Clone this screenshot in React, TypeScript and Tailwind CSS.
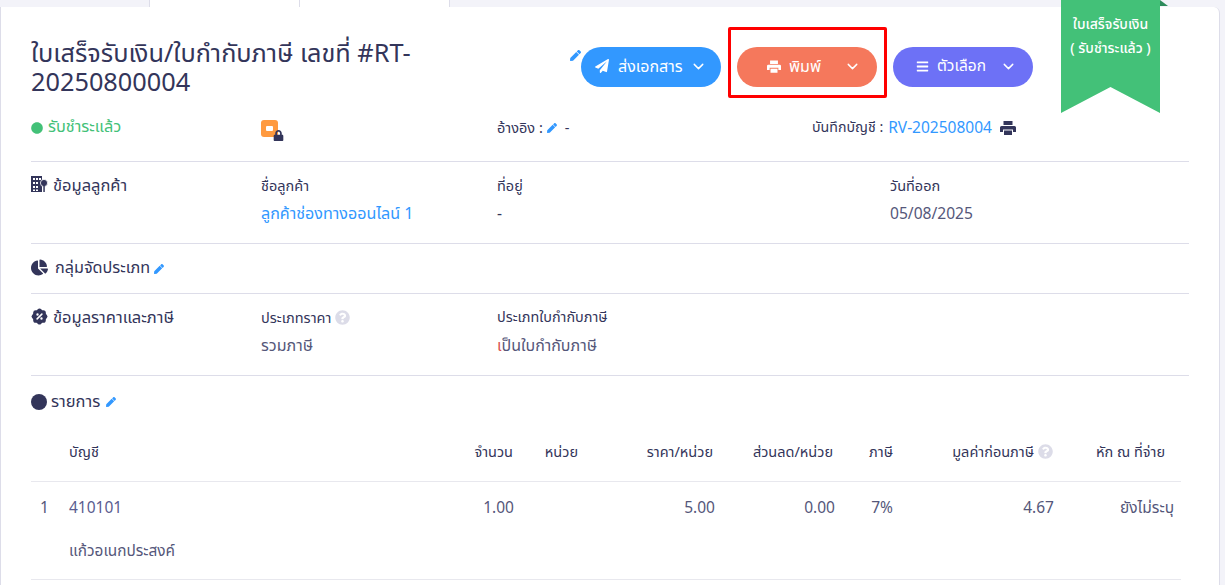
import { FaPaperPlane, FaBars, FaPen, FaChartPie, FaLock, FaQuestionCircle, FaCircle } from "react-icons/fa";
import { FiChevronDown } from "react-icons/fi";
import { TbRosetteDiscountFilled } from "react-icons/tb";

const font = { fontFamily: '"Noto Sans", "Noto Sans Thai", sans-serif' };
const Pen = ({ c = "" }: { c?: string }) => <FaPen className={`text-[#3298ff] text-[10px] ${c}`} />;
const Q = () => <FaQuestionCircle className="text-[#dcdce8] text-[15px] shrink-0" />;

const Th = ({ w, children, right = true }: { w: string; children?: React.ReactNode; right?: boolean }) => (
  <div className={`${w} shrink-0 ${right ? "flex justify-end items-center gap-1 whitespace-nowrap" : ""}`}>{children}</div>
);

const Building = () => (
  <svg width="17" height="17" viewBox="0 0 17 17" className="shrink-0 mt-[3px]">
    <path fill="#33355a" fillRule="evenodd" d="M0 0h11v16H0zM2 2v2h2V2zm3 0v2h2V2zm3 0v2h2V2zM2 6v2h2V6zm3 0v2h2V6zM2 10v2h2v-2zm3 0v2h2v-2zM2 13.500V15h2v-1.500zm3 0V15h2v-1.500z" />
    <circle cx="13" cy="7" r="3.600" fill="#33355a" stroke="#fff" strokeWidth="0.800" />
    <rect x="12.300" y="9" width="1.500" height="7" fill="#33355a" />
  </svg>
);

const Printer = ({ c = "" }: { c?: string }) => (
  <svg viewBox="0 0 16 14" className={`shrink-0 ${c}`} fill="currentColor">
    <path d="M3.500 0h9v4h-9zM1.500 5h13a1.500 1.500 0 0 1 1.500 1.500V11h-3V8.500H3V11H0V6.500A1.500 1.500 0 0 1 1.500 5zM4 9.500h8V14H4z" />
  </svg>
);

export default function App() {
  return (
    <div style={font} className="w-[1225px] h-[585px] overflow-hidden bg-[#f3f3f9] text-[#33355a] text-[16px] relative">
      <div className="ml-[149px] w-[301px] h-[8px] bg-white border border-t-0 border-[#dddde9] flex">
        <div className="w-[150px] border-r border-[#dddde9]" />
      </div>
      <div className="w-[1220px] h-[600px] -mt-px bg-white border-l border-r border-[#dddde9] rounded-tr-md pl-[30px] pr-[30px] relative">
        <div className="absolute top-[-7px] left-[1159px] w-0 h-0 border-l-[8px] border-t-[6px] border-l-[#2e8b5c] border-t-transparent" />
        <div className="absolute top-[-7px] left-[1060px] w-[99px] h-[113px] bg-[#43c178] text-white text-[14px] font-medium text-center pt-[14px] [clip-path:polygon(0_0,100%_0,100%_100%,50%_77%,0_100%)]">
          <div className="leading-[20px] whitespace-nowrap">ใบเสร็จรับเงิน</div>
          <div className="leading-[28px] whitespace-nowrap">( รับชำระแล้ว )</div>
        </div>
        <div className="flex pt-[32px] h-[97px]">
          <h1 className="w-[400px] shrink-0 text-[25.3px] leading-[29px] font-normal -mt-[1px]">ใบเสร็จรับเงิน/ใบกำกับภาษี เลขที่ #RT-20250800004</h1>
          <div className="ml-[139px] flex items-start pt-[8px] relative">
            <Pen c="mt-[3px] text-[11px]" />
            <button className="w-[140px] h-[40px] rounded-full bg-[#3298ff] text-white text-[16px] flex items-center pl-[14px] pb-[2px]"><FaPaperPlane className="text-[14px] mr-[9px]" />ส่งเอกสาร<FiChevronDown className="text-[17px] ml-[7px]" /></button>
            <div className="ml-[7px] border-[3px] border-[#ff0000] rounded-[2px] pl-[6px] pr-[7px] pt-[17px] pb-[8px] -mt-[20px]">
              <button className="w-[140px] h-[40px] rounded-full bg-[#f5785c] text-white text-[16px] flex items-center pl-[30px] pb-[2px]"><Printer c="w-[14px] h-[13px] mr-[8px]" />พิมพ์<FiChevronDown className="text-[17px] ml-[23px]" /></button>
            </div>
            <button className="ml-[6px] w-[140px] h-[40px] rounded-full bg-[#6d71f6] text-white text-[15.5px] flex items-center pl-[23px] pb-[2px]"><FaBars className="text-[13px] mr-[8px]" />ตัวเลือก<FiChevronDown className="text-[17px] ml-[14px]" /></button>
          </div>
        </div>
        <div className="flex h-[58px] pt-[10px] border-b border-[#dddde9]">
          <div className="w-[230px] flex items-start gap-[5px] text-[#43c178] text-[16.3px] leading-[24px]"><FaCircle className="text-[12px] mt-[8px]" />รับชำระแล้ว</div>
          <div className="w-[236px] relative pt-[6px]">
            <div className="w-[17px] h-[17px] bg-[#ff9a3f] rounded-[3px] flex items-center justify-center"><div className="w-[7px] h-[5px] bg-white rounded-[1px]" /></div>
            <FaLock className="absolute left-[12px] top-[16px] text-[11px]" />
          </div>
          <div className="w-[315px] flex items-start text-[14.5px] leading-[24px] pt-[1px]">อ้างอิง :<Pen c="mt-[8px] ml-[4px] mr-[8px]" />-</div>
          <div className="flex items-start text-[14.2px] leading-[24px] whitespace-nowrap pt-[1px]">บันทึกบัญชี :<span className="ml-[5px] text-[#3298ff] text-[15.5px]">RV-202508004</span><Printer c="w-[16px] h-[14px] ml-2 mt-[6px]" /></div>
        </div>
        <div className="flex h-[82px] pt-[11px] border-b border-[#dddde9]">
          <div className="w-[230px] flex items-start gap-[5px] text-[16.5px] leading-[24px]"><Building />ข้อมูลลูกค้า</div>
          <div className="w-[236px] text-[14.5px] leading-[24px]">ชื่อลูกค้า<div className="text-[#3298ff] text-[16.1px] mt-[4px]">ลูกค้าช่องทางออนไลน์ 1</div></div>
          <div className="w-[393px] text-[14.5px] leading-[24px]">ที่อยู่<div className="mt-[4px] text-[15.5px]">-</div></div>
          <div className="text-[14.5px] leading-[24px]">วันที่ออก<div className="mt-[4px] text-[15.6px] text-[#55577a]">05/08/2025</div></div>
        </div>
        <div className="flex h-[50px] items-center border-b border-[#dddde9] pb-[2px]"><FaChartPie className="text-[17px] mr-[7px]" /><span className="text-[16.2px]">กลุ่มจัดประเภท</span><Pen c="ml-[4px] mt-[2px]" /></div>
        <div className="flex h-[82px] pt-[11px] border-b border-[#dddde9]">
          <div className="w-[230px] flex items-start gap-[4px] text-[16.5px] leading-[24px]"><TbRosetteDiscountFilled className="text-[19px] mt-[2px] -ml-px" />ข้อมูลราคาและภาษี</div>
          <div className="w-[236px] text-[14.5px] leading-[24px]"><div className="flex items-center gap-[4px]">ประเภทราคา <Q /></div><div className="text-[16px] mt-[4px] text-[#55577a]">รวมภาษี</div></div>
          <div className="text-[14.4px] leading-[24px]">ประเภทใบกำกับภาษี<div className="text-[16px] mt-[4px] text-[#55577a]"><span className="text-[#d9534f]">เ</span>ป็นใบกำกับภาษี</div></div>
        </div>
        <div className="flex h-[52px] items-center gap-1"><span className="w-[16px] h-[16px] rounded-full bg-[#33355a]" /><span className="text-[16.5px] -mt-[1px]">รายการ</span><Pen c="ml-[2px]" /></div>
        <div className="w-[1150px] text-[14.5px]">
          <div className="flex items-center h-[54px] border-b border-[#e8e8ee] pb-[6px]">
            <Th w="w-[38px]" right={false} />
            <Th w="w-[406px]" right={false}>บัญชี</Th>
            <Th w="w-[38px]">จำนวน</Th>
            <Th w="w-[65px]">หน่วย</Th>
            <Th w="w-[135px]">ราคา/หน่วย</Th>
            <Th w="w-[120px]">ส่วนลด/หน่วย</Th>
            <Th w="w-[60px]">ภาษี</Th>
            <Th w="w-[160px]">มูลค่าก่อนภาษี <Q /></Th>
            <Th w="w-[112px]">หัก ณ ที่จ่าย</Th>
          </div>
          <div className="border-b border-[#e8e8ee] h-[98px] text-[15.5px] text-[#55577a]">
            <div className="flex items-center h-[52px]">
              <div className="w-[38px] pl-[9px]">1</div>
              <div className="w-[406px] text-[#5a5c8f]">410101</div>
              <div className="w-[39px] text-right">1.00</div>
              <div className="w-[201px] text-right">5.00</div>
              <div className="w-[120px] text-right">0.00</div>
              <div className="w-[58px] text-right">7%</div>
              <div className="w-[161px] text-right">4.67</div>
              <div className="w-[120px] text-right">ยังไม่ระบุ</div>
            </div>
            <div className="pl-[38px] pt-[5px] text-[15.4px]">แก้วอเนกประสงค์</div>
          </div>
        </div>
      </div>
    </div>
  );
}
